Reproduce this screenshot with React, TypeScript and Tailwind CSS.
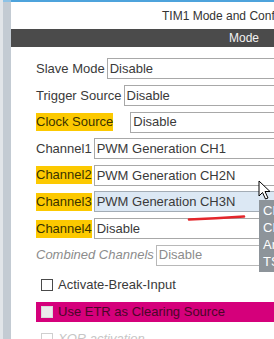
import React from "react";

type SelectRowProps = {
  label: string;
  value: string;
  highlight?: boolean;
  active?: boolean;
  muted?: boolean;
  wide?: boolean;
};

const SelectRow: React.FC<SelectRowProps> = ({ label, value, highlight, active, muted, wide }) => {
  return (
    <div className="flex h-[26.6px] shrink-0 items-center">
      <span
        className={
          highlight
            ? "bg-[#fcc900] leading-[18px] text-[#3a3300]"
            : muted
            ? "italic leading-[18px] text-[#8c8c8c]"
            : "leading-[18px]"
        }
      >
        {label}
      </span>
      <div
        className={
          (wide ? "ml-[17px] " : "ml-[2px] ") +
          (active
            ? "flex h-[21px] flex-1 items-center border border-[#a3acb5] bg-[#dce8f4] pl-[2px]"
            : muted
            ? "flex h-[21px] flex-1 items-center border border-[#b8b8b8] bg-white pl-[2px] text-[#8c8c8c]"
            : "flex h-[21px] flex-1 items-center border border-[#a8a8a8] bg-white pl-[2px]")
        }
      >
        {value}
      </div>
    </div>
  );
};

export default function App() {
  return (
    <div className="relative flex h-[339px] w-[274px] overflow-hidden bg-white font-['Liberation_Sans',Arial,sans-serif] text-[13px] text-[#3a3a3a]">
      <div className="w-[3px] shrink-0 bg-[#e1e5e9]" />
      <div className="w-[8px] shrink-0 border-t-2 border-[#8cc2e6] bg-[#c3cbd3]" />

      <div className="flex min-w-[420px] shrink-0 flex-col border-t-2 border-[#4da3dc]">
        <div className="flex h-[27px] shrink-0 items-center whitespace-nowrap pl-[151px] text-[12px] text-[#333]">
          TIM1 Mode and Configuration
        </div>
        <div className="flex h-[18px] shrink-0 items-center bg-[#4b4b4b] pl-[218px] text-[12px] text-[#f2f2f2]">
          Mode
        </div>

        <div className="flex shrink-0 flex-col whitespace-nowrap pl-[25px] pt-[8.7px]">
          <SelectRow label="Slave Mode" value="Disable" />
          <SelectRow label="Trigger Source" value="Disable" />
          <SelectRow label="Clock Source" value="Disable" highlight wide />
          <SelectRow label="Channel1" value="PWM Generation CH1" />
          <SelectRow label="Channel2" value="PWM Generation CH2N" highlight />
          <SelectRow label="Channel3" value="PWM Generation CH3N" highlight active />
          <SelectRow label="Channel4" value="Disable" highlight />
          <SelectRow label="Combined Channels" value="Disable" muted />

          <div className="mt-[3px] flex h-[27px] shrink-0 items-center">
            <span className="ml-[5px] h-[12px] w-[12px] border border-[#4a4a4a] bg-white" />
            <span className="ml-[5px]">Activate-Break-Input</span>
          </div>

          <div className="flex h-[27px] shrink-0 items-center">
            <div className="flex h-[20px] flex-1 items-center bg-[#d5007b] pl-[5px] text-[#4a0628]">
              <span className="h-[12px] w-[12px] border border-[#d9d9d9] bg-[#ebebeb]" />
              <span className="ml-[5px]">Use ETR as Clearing Source</span>
            </div>
          </div>

          <div className="flex h-[27px] shrink-0 items-center">
            <span className="ml-[5px] h-[12px] w-[12px] border border-[#cfcfcf] bg-white" />
            <span className="ml-[5px] italic text-[#c6c6c6]">XOR activation</span>
          </div>
        </div>
      </div>

      {/* hand drawn red underline */}
      <svg className="pointer-events-none absolute left-0 top-0" width="274" height="339">
        <path d="M189 219.5 Q 215 218.5 244 216.5" stroke="#e3262b" strokeWidth="2.6" fill="none" strokeLinecap="round" />
      </svg>

      {/* tooltip */}
      <div className="absolute left-[259px] top-[200px] h-[72px] w-[80px] whitespace-nowrap bg-[#8d949a] pl-[4px] pt-[2px] text-[13px] leading-[17px] text-white">
        <div>CH3N</div>
        <div>CH3</div>
        <div>Are</div>
        <div>TSx</div>
      </div>

      {/* mouse pointer */}
      <svg className="pointer-events-none absolute left-[258px] top-[180px]" width="14" height="21" viewBox="0 0 14 21">
        <path d="M1 1 L1 16 L4.5 12.5 L7.5 19 L10 18 L7 11.5 L12 11.5 Z" fill="#fff" stroke="#000" strokeWidth="1" strokeLinejoin="round" />
      </svg>
    </div>
  );
}
